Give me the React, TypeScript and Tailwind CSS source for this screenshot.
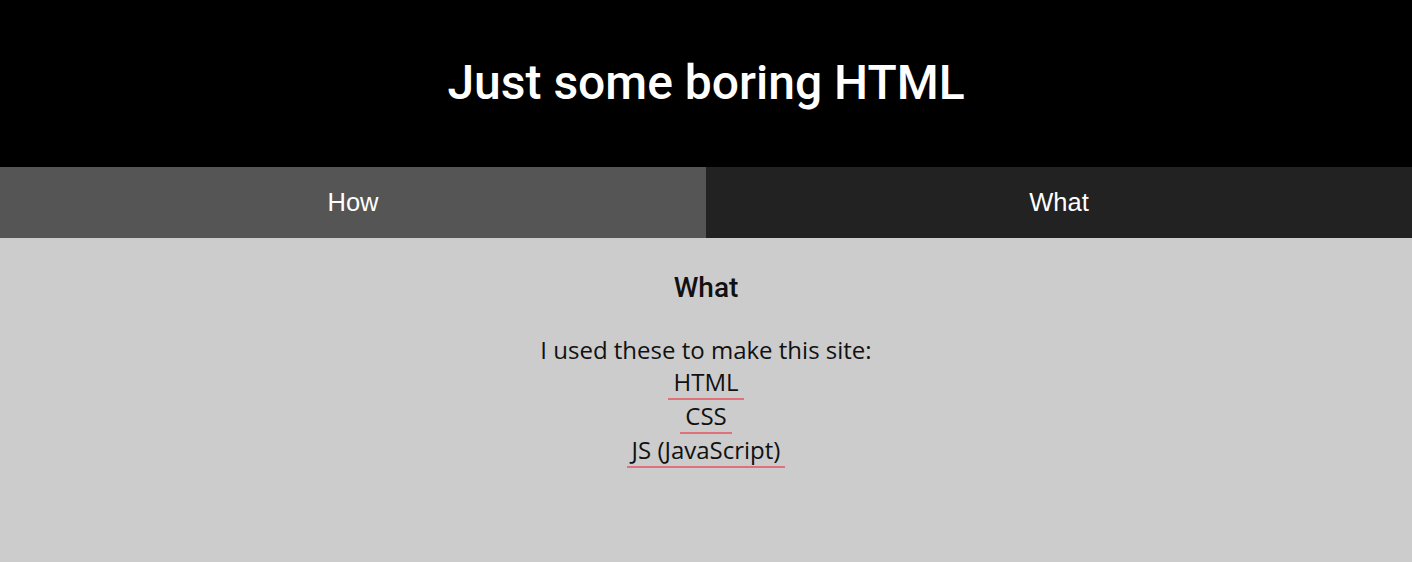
const tools = ["HTML", "CSS", "JS (JavaScript)"];

export default function App() {
  return (
    <div className="min-h-[562px] bg-[#cccccc] flex flex-col">
      <header className="h-[167px] bg-black flex items-center justify-center">
        <h1 className="font-['Roboto',sans-serif] text-[48px] font-medium text-white pb-[2px]">
          Just some boring HTML
        </h1>
      </header>
      <nav className="grid grid-cols-2 h-[71px] font-['Liberation_Sans',Arial,sans-serif] text-[25.5px] text-white">
        <div className="bg-[#555555] flex items-center justify-center">How</div>
        <div className="bg-[#222222] flex items-center justify-center">What</div>
      </nav>
      <main className="flex flex-col items-center pt-[36px] text-[#111111]">
        <h2 className="font-['Roboto',sans-serif] text-[28px] font-medium leading-none">What</h2>
        <p className="mt-[31px] font-['Open_Sans',sans-serif] text-[24px] leading-[33px]">
          I used these to make this site:
        </p>
        <ul className="flex flex-col items-center font-['Open_Sans',sans-serif] text-[24px]">
          {tools.map((t) => (
            <li key={t} className="px-[5px] border-b-2 border-[#e0707a] leading-[32px]">
              {t}
            </li>
          ))}
        </ul>
      </main>
    </div>
  );
}
